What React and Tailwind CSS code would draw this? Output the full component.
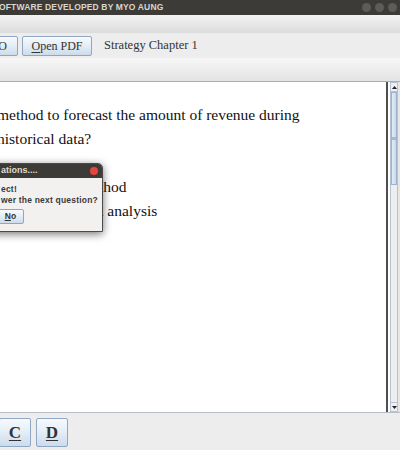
import React from 'react';

const blueBtn =
    'flex items-center border border-[#8ea7c4] rounded-[2px] bg-gradient-to-b from-[#f7fafd] via-[#e4edf6] to-[#cddbea] text-[#333]';

const ScrollArrow = ({ down }) => (
    <div className="flex h-[10px] items-center justify-center border-b border-t border-[#b4c2d2] bg-[#eef0f3]">
        <svg width="5" height="3" viewBox="0 0 5 3">
            <path d={down ? 'M0 0H5L2.5 3Z' : 'M0 3H5L2.5 0Z'} fill="#222" />
        </svg>
    </div>
);

export default function App() {
    return (
        <div
            className="relative flex h-[450px] w-[400px] flex-col overflow-hidden bg-[#ededed]"
            style={{ fontFamily: '"Liberation Serif", serif' }}
        >
            {/* window title */}
            <div className="flex h-[15px] items-center justify-between bg-[#3c3b37] pr-[3px]">
                <span
                    className="ml-[-1px] text-[8.5px] font-bold tracking-[0.15px] text-[#d9d6ce]"
                    style={{ fontFamily: '"Liberation Sans", sans-serif' }}
                >
                    OFTWARE DEVELOPED BY MYO AUNG
                </span>
                <div className="flex gap-[4px]">
                    <span className="h-[9px] w-[9px] rounded-full bg-[#5d5c58]" />
                    <span className="h-[9px] w-[9px] rounded-full bg-[#5d5c58]" />
                    <span className="h-[9px] w-[9px] rounded-full bg-[#5d5c58]" />
                </div>
            </div>

            <div className="h-[18px] bg-gradient-to-b from-[#f3f3f3] to-[#dcdcdc]" />

            {/* toolbar */}
            <div className="flex h-[25px] items-center gap-[4px] bg-[#ededed] text-[12px]">
                <button className={`${blueBtn} ml-[-20px] h-[20px] w-[38px] justify-end pr-[10px]`}>O</button>
                <button className={`${blueBtn} h-[20px] w-[70px] justify-center`}>
                    <span className="underline underline-offset-2">O</span>pen PDF
                </button>
                <span className="ml-[8px] text-[12.5px] text-[#333]">Strategy Chapter 1</span>
            </div>

            <div className="h-[23px] bg-gradient-to-b from-[#f7f7f7] to-[#e3e3e3]" />

            {/* question area */}
            <div className="flex h-[332px] border-b border-t border-b-[#b9bec4] border-t-[#a7b0b9] bg-white">
                <div className="flex-1 pt-[21px] text-[15.5px] leading-[24px] text-[#111]">
                    <p className="ml-[-3px] whitespace-nowrap">method to forecast the amount of revenue during</p>
                    <p className="ml-[-3px] whitespace-nowrap">historical data?</p>
                    <p>&nbsp;</p>
                    <p className="whitespace-nowrap pl-[80px]">method</p>
                    <p className="whitespace-nowrap pl-[67px]">Trend analysis</p>
                </div>
                <div className="w-[2px] bg-[#4e4e4e]" />
                <div className="w-[2px] bg-white" />
                <div className="flex w-[8px] flex-col border-x border-[#b4c2d2] bg-[#eeeeee]">
                    <ScrollArrow />
                    <div className="flex h-[93px] items-center justify-center border border-[#9db3cd] bg-gradient-to-r from-[#e3ecf6] to-[#c9d9eb]">
                        <span className="h-[3px] w-[4px] bg-[#a3badb]" />
                    </div>
                    <div className="flex-1" />
                    <ScrollArrow down />
                </div>
                <div className="w-[2px] bg-[#e6e6e6]" />
            </div>

            {/* answer buttons */}
            <div className="flex flex-1 gap-[5px] pt-[5px]" >
                <button className={`${blueBtn} ml-[-1px] h-[29px] w-[32px] justify-center text-[17px] font-bold`}>
                    <span className="underline underline-offset-2">C</span>
                </button>
                <button className={`${blueBtn} h-[29px] w-[32px] justify-center text-[17px] font-bold`}>
                    <span className="underline underline-offset-2">D</span>
                </button>
            </div>

            {/* confirmation dialog */}
            <div
                className="absolute left-[-10px] top-[163px] flex h-[69px] w-[113px] flex-col overflow-hidden rounded-t-[5px] border border-[#4a4a4a] bg-[#f2f1f0] shadow-[0_2px_8px_rgba(0,0,0,0.55)]"
                style={{ fontFamily: '"Liberation Sans", sans-serif' }}
            >
                <div className="flex h-[14px] items-center justify-between bg-[#3c3b37] pl-[10px] pr-[4px]">
                    <span className="text-[9px] font-bold text-[#dfdbd2]">ations....</span>
                    <span className="h-[8px] w-[8px] rounded-full bg-[#e5463a]" />
                </div>
                <div className="flex flex-col pl-[10px] pt-[6px] text-[8.5px] font-bold leading-[11px] tracking-[0.2px] text-[#3a3a3a]">
                    <span>ect!</span>
                    <span className="whitespace-nowrap">wer the next question?</span>
                    <button className={`${blueBtn} ml-[-4px] mt-[3px] h-[15px] w-[27px] justify-center text-[8.5px] font-bold`}>
                        <span className="underline">N</span>o
                    </button>
                </div>
            </div>
        </div>
    );
}
